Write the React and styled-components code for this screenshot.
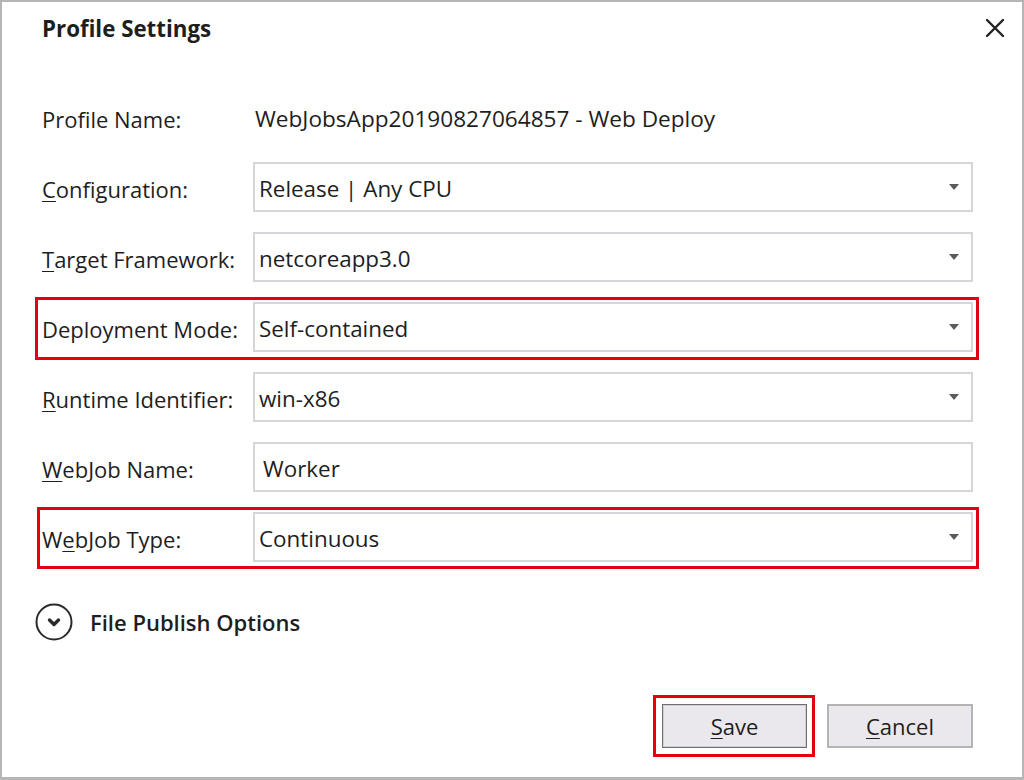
import React from "react";
import styled, { createGlobalStyle } from "styled-components";

const GlobalStyle = createGlobalStyle`
    html, body {
        margin: 0;
        padding: 0;
        background: #fff;
    }
    body {
        font-family: "Open Sans", "Noto Sans", sans-serif;
        color: #1e1e1e;
    }
`

const Dialog = styled.div`
    position: relative;
    box-sizing: border-box;
    width: 1024px;
    height: 780px;
    display: flex;
    flex-direction: column;
    padding: 0 49px 29px 40px;
    background: #fff;
    border: 2px solid #b5b5b5;
    border-bottom-width: 3px;
`

const Header = styled.div`
    display: flex;
    align-items: flex-start;
    justify-content: space-between;
    height: 90px;
    margin-right: -34px;
`

const Title = styled.h1`
    margin: 0;
    padding-top: 12px;
    font-size: 22.3px;
    line-height: 30px;
    font-weight: 700;
    color: #1e1e1e;
`

const CloseButton = styled.button`
    width: 24px;
    height: 24px;
    margin-top: 14px;
    padding: 0;
    border: none;
    background: none;
    display: flex;
    align-items: center;
    justify-content: center;
    cursor: pointer;
`

const Form = styled.div`
    display: flex;
    flex-direction: column;
    gap: 20px;
`

const Row = styled.div`
    position: relative;
    display: grid;
    grid-template-columns: 211px 1fr;
    align-items: center;
    height: 50px;
`

const Highlight = styled.div`
    ${props => `
        position: absolute;
        top: ${props.$top}px;
        left: ${props.$left}px;
        right: ${props.$right}px;
        bottom: ${props.$bottom}px;
        border: 3px solid #e3000f;
        pointer-events: none;
    `}
`

const Label = styled.span`
    padding-top: 3px;
    font-size: 22px;
    color: #1e1e1e;
    white-space: nowrap;
`

const Key = styled.u`
    text-decoration-thickness: 1px;
    text-underline-offset: 3px;
`

const Value = styled.span`
    padding-top: 3px;
    padding-left: 2px;
    font-size: 22.6px;
    color: #1e1e1e;
    white-space: nowrap;
`

const Field = styled.div`
    ${props => `
        box-sizing: border-box;
        height: 50px;
        display: flex;
        align-items: center;
        justify-content: space-between;
        padding: 3px 12px 0 ${props.$text ? 8 : 4}px;
        border: 2px solid #d7d5da;
        background: #fff;
        font-size: 22.4px;
        color: #1e1e1e;
    `}
`

const Caret = styled.span`
    width: 0;
    height: 0;
    margin-top: -3px;
    border-left: 5px solid transparent;
    border-right: 5px solid transparent;
    border-top: 6px solid #5a5a5a;
`

const Expander = styled.div`
    display: flex;
    align-items: center;
    gap: 17px;
    margin: 41px 0 0 -7px;
    height: 38px;
`

const ExpanderText = styled.span`
    font-size: 22px;
    font-weight: 600;
    color: #1e1e1e;
`

const Footer = styled.div`
    display: flex;
    justify-content: flex-end;
    gap: 20px;
    margin-top: auto;
`

const ButtonWrap = styled.div`
    position: relative;
`

const Button = styled.button`
    ${props => `
        box-sizing: border-box;
        width: ${props.$width}px;
        height: 44px;
        padding: 0;
        font-family: "Open Sans", "Noto Sans", sans-serif;
        font-size: 22px;
        color: #1e1e1e;
        background: #eae8ec;
        border: ${props.$primary ? "1px solid #6e6e6e" : "2px solid #b4b4b4"};
        box-shadow: ${props.$primary ? "inset 0 0 0 1px #d2d0d4" : "none"};
        cursor: pointer;
    `}
`

function ChevronCircle() {
    return (
        <svg width="38" height="38" viewBox="0 0 38 38">
            <circle cx="19" cy="19" r="17.5" fill="none" stroke="#2a2a2a" strokeWidth="2" />
            <path d="M14.5 17 L19 21.5 L23.5 17" fill="none" stroke="#2a2a2a" strokeWidth="3.4" strokeLinecap="round" strokeLinejoin="round" />
        </svg>
    )
}

const rows = [
    { label: "Configuration:", key: 0, value: "Release | Any CPU", select: true },
    { label: "Target Framework:", key: 0, value: "netcoreapp3.0", select: true },
    { label: "Deployment Mode:", key: -1, value: "Self-contained", select: true, hl: { top: -5, left: -7, right: -6, bottom: -8 } },
    { label: "Runtime Identifier:", key: 0, value: "win-x86", select: true },
    { label: "WebJob Name:", key: 0, value: "Worker", select: false },
    { label: "WebJob Type:", key: 1, value: "Continuous", select: true, hl: { top: -5, left: -5, right: -6, bottom: -7 } },
]

function renderLabel(text, key) {
    if (key < 0) return text;
    return (
        <>
            {text.slice(0, key)}
            <Key>{text[key]}</Key>
            {text.slice(key + 1)}
        </>
    )
}

function App() {
    return (
        <>
            <GlobalStyle />
            <Dialog>
                <Header>
                    <Title>Profile Settings</Title>
                    <CloseButton aria-label="Close">
                        <svg width="20" height="20" viewBox="0 0 20 20">
                            <path d="M2 2 L18 18 M18 2 L2 18" stroke="#222" strokeWidth="2.4" strokeLinecap="round" />
                        </svg>
                    </CloseButton>
                </Header>

                <Form>
                    <Row>
                        <Label>Profile Name:</Label>
                        <Value>WebJobsApp20190827064857 - Web Deploy</Value>
                    </Row>
                    {rows.map(r => (
                        <Row key={r.label}>
                            <Label>{renderLabel(r.label, r.key)}</Label>
                            <Field $text={!r.select}>
                                <span>{r.value}</span>
                                {r.select && <Caret />}
                            </Field>
                            {r.hl && <Highlight $top={r.hl.top} $left={r.hl.left} $right={r.hl.right} $bottom={r.hl.bottom} />}
                        </Row>
                    ))}
                </Form>

                <Expander>
                    <ChevronCircle />
                    <ExpanderText>File Publish Options</ExpanderText>
                </Expander>

                <Footer>
                    <ButtonWrap>
                        <Button $primary $width={145}><Key>S</Key>ave</Button>
                        <Highlight $top={-9} $left={-9} $right={-8} $bottom={-9} />
                    </ButtonWrap>
                    <ButtonWrap>
                        <Button $width={146}><Key>C</Key>ancel</Button>
                    </ButtonWrap>
                </Footer>
            </Dialog>
        </>
    );
}

export default App;
